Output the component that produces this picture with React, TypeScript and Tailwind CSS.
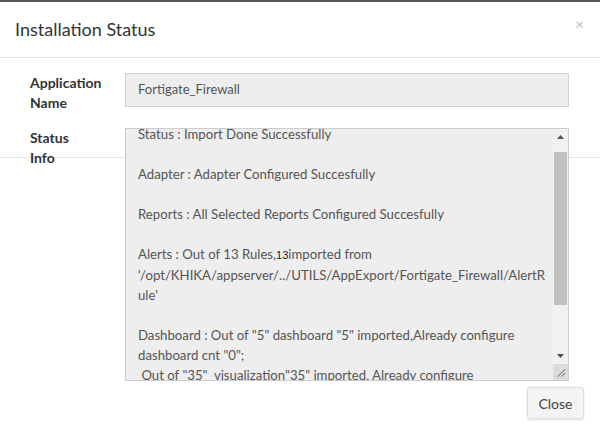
import React from 'react';

const statusLines: (string | null)[] = [
  'Status : Import Done Successfully',
  null,
  'Adapter : Adapter Configured Succesfully',
  null,
  'Reports : All Selected Reports Configured Succesfully',
  null,
  'ALERTS',
  "'/opt/KHIKA/appserver/../UTILS/AppExport/Fortigate_Firewall/AlertR",
  "ule'",
  null,
  'Dashboard : Out of "5" dashboard "5" imported,Already configure',
  'dashboard cnt "0";',
  ' Out of "35"  visualization"35" imported, Already configure',
];

const ScrollBar: React.FC = () => (
  <div className="w-[15px] flex flex-col bg-[#f1f1f1]">
    <div className="h-[16px] flex items-center justify-center">
      <svg width="7" height="4" viewBox="0 0 7 4">
        <path d="M0 4 L3.5 0 L7 4 Z" fill="#505050" />
      </svg>
    </div>
    <div className="flex-1 flex flex-col px-[1px]">
      <div className="h-[7px]" />
      <div className="h-[153px] bg-[#c1c1c1]" />
    </div>
    <div className="h-[16px] flex items-center justify-center">
      <svg width="7" height="4" viewBox="0 0 7 4">
        <path d="M0 0 L7 0 L3.5 4 Z" fill="#505050" />
      </svg>
    </div>
    <div className="h-[16px] bg-[#dcdcdc] flex items-end justify-end">
      <svg width="16" height="16" viewBox="0 0 16 16">
        <path d="M13 5 L5 13 M13 9 L9 13" stroke="#555" strokeWidth="1" />
      </svg>
    </div>
  </div>
);

export default function App() {
  return (
    <div className="w-[600px] h-[436px] bg-white border-t-2 border-[#555] overflow-hidden font-['Lato',sans-serif] text-[#333]">
      {/* header */}
      <div className="h-[56px] px-[15px] flex items-center justify-between border-b border-[#e5e5e5]">
        <h4 className="text-[18px] leading-none -mt-[1px]">Installation Status</h4>
        <span className="text-[16px] text-[#c4c4c4] leading-none -mt-[12px] mr-[1px]">×</span>
      </div>

      {/* body */}
      <div className="h-[100px] border-b border-[#e5e5e5] px-[30px] pt-[15px]">
        <div className="flex">
          <div className="w-[95px] text-[14px] font-bold leading-[20px]">
            Application<br />Name
          </div>
          <div className="w-[444px] h-[34px] bg-[#eee] border border-[#d2d2d2] px-[12px] flex items-center text-[13px] text-[#555]">
            Fortigate_Firewall
          </div>
        </div>
        <div className="flex mt-[15px]">
          <div className="w-[95px] text-[14px] font-bold leading-[20px]">
            Status<br />Info
          </div>
          <div className="w-[444px] h-[253px] bg-[#eee] border border-[#ccc] flex">
            <div className="flex-1 overflow-hidden pl-[12px]">
              <div className="-mt-[5px] text-[13.2px] leading-[20px] text-[#555] whitespace-pre">
                {statusLines.map((l, i) =>
                  l === null ? (
                    <div key={i} className="h-[20px]" />
                  ) : l === 'ALERTS' ? (
                    <div key={i}>
                      Alerts : Out of 13 Rules,
                      <span className="font-['Liberation_Sans',sans-serif] text-[11px] text-[#222]">13</span>
                      imported from
                    </div>
                  ) : (
                    <div key={i}>{l}</div>
                  )
                )}
              </div>
            </div>
            <ScrollBar />
          </div>
        </div>
      </div>

      {/* footer */}
      <div className="flex justify-end pt-[229px] pr-[16px]">
        <button className="w-[57px] h-[32px] bg-[#f4f4f4] border border-[#ddd] rounded-[3px] text-[14px] text-[#444] shadow-sm">
          Close
        </button>
      </div>
    </div>
  );
}
